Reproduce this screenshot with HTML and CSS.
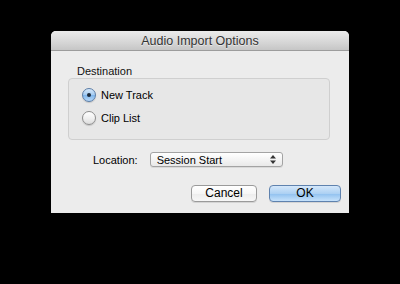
FILE: index.html
```html
<!DOCTYPE html>
<html lang="en">
<head>
  <meta charset="UTF-8" />
  <title>Audio Import Options</title>
  <link rel="stylesheet" href="styles.css">
</head>
<body>
  <div class="dialog">
    <div class="titlebar">Audio Import Options</div>
    <div class="content">
      <div class="legend">Destination</div>
      <div class="group">
        <label class="radio-row">
          <span class="radio checked"></span>
          <span>New Track</span>
        </label>
        <label class="radio-row">
          <span class="radio"></span>
          <span>Clip List</span>
        </label>
      </div>

      <div class="location-row">
        <span class="location-label">Location:</span>
        <div class="popup">
          <span>Session Start</span>
          <span class="arrows">
            <svg width="6" height="9" viewBox="0 0 6 9">
              <path d="M0 3.5 L3 0 L6 3.5 Z" fill="#333"/>
              <path d="M0 5.5 L3 9 L6 5.5 Z" fill="#333"/>
            </svg>
          </span>
        </div>
      </div>

      <div class="buttons">
        <button class="btn">Cancel</button>
        <button class="btn default">OK</button>
      </div>
    </div>
  </div>
</body>
</html>
```

FILE: styles.css
```css
body {
  margin: 0;
  background: #000;
  font-family: "Liberation Sans", Arial, sans-serif;
  font-size: 11px;
  color: #000;
}

.dialog {
  width: 298px;
  height: 182px;
  margin: 31px auto 0;
  background: #ececec;
  border-radius: 5px 5px 0 0;
  overflow: hidden;
}

.titlebar {
  height: 19px;
  line-height: 20px;
  border-bottom: 1px solid #9c9c9c;
  background: linear-gradient(#ebebeb, #d6d6d6 60%, #c6c6c6);
  text-align: center;
  font-size: 12.5px;
  color: #333;
  text-shadow: 0 1px 0 rgba(255, 255, 255, 0.5);
}

.content {
  padding: 0 19px 0 17px;
}

.legend {
  margin-top: 14px;
  margin-left: 9px;
  line-height: 13px;
  color: #111;
}

.group {
  width: 260px;
  padding-top: 4px;
  height: 56px;
  border: 1px solid #cfcfcf;
  border-radius: 4px;
  background: #e7e7e7;
}

.radio-row {
  display: flex;
  align-items: center;
  height: 23px;
  padding-left: 13px;
  gap: 5px;
}

.radio {
  width: 12px;
  height: 12px;
  border-radius: 50%;
  border: 1px solid #8d8d8d;
  background: linear-gradient(#ffffff, #f1f1f1 50%, #dcdcdc);
  box-shadow: 0 1px 1px rgba(0, 0, 0, 0.15);
  display: flex;
  align-items: center;
  justify-content: center;
}

.radio.checked {
  border-color: #5a7ca6;
  background: linear-gradient(#d6e8fa, #a4cbf1 50%, #7fb6ec 51%, #b7d8f8);
}

.radio.checked::after {
  content: "";
  width: 4px;
  height: 4px;
  border-radius: 50%;
  background: #1d2a3a;
}

.location-row {
  display: flex;
  align-items: center;
  margin-top: 12px;
  height: 15px;
  padding-left: 25px;
  gap: 12px;
}

.popup {
  width: 122px;
  height: 13px;
  padding: 0 3px 0 6px;
  display: flex;
  align-items: center;
  justify-content: space-between;
  border: 1px solid #a3a3a3;
  border-radius: 3px;
  background: linear-gradient(#ffffff, #f4f4f4 50%, #e9e9e9);
  box-shadow: 0 1px 0 rgba(0, 0, 0, 0.08);
}

.arrows {
  width: 12px;
  display: flex;
  justify-content: center;
}

.buttons {
  display: flex;
  justify-content: flex-end;
  gap: 12px;
  margin-top: 18px;
  margin-right: -11px;
}

.btn {
  height: 17px;
  padding: 0;
  font-family: "Liberation Sans", Arial, sans-serif;
  font-size: 12px;
  line-height: 15px;
  color: #000;
  border: 1px solid #9a9a9a;
  border-radius: 4px;
  background: linear-gradient(#ffffff, #f6f6f6 50%, #ececec 51%, #f7f7f7);
  box-shadow: 0 1px 0 rgba(0, 0, 0, 0.1);
  width: 66px;
}

.btn.default {
  width: 72px;
  border-color: #5f82ae;
  background: linear-gradient(#d4e7fa, #add1f3 50%, #8fc0ef 51%, #c6e2fb);
}
```
